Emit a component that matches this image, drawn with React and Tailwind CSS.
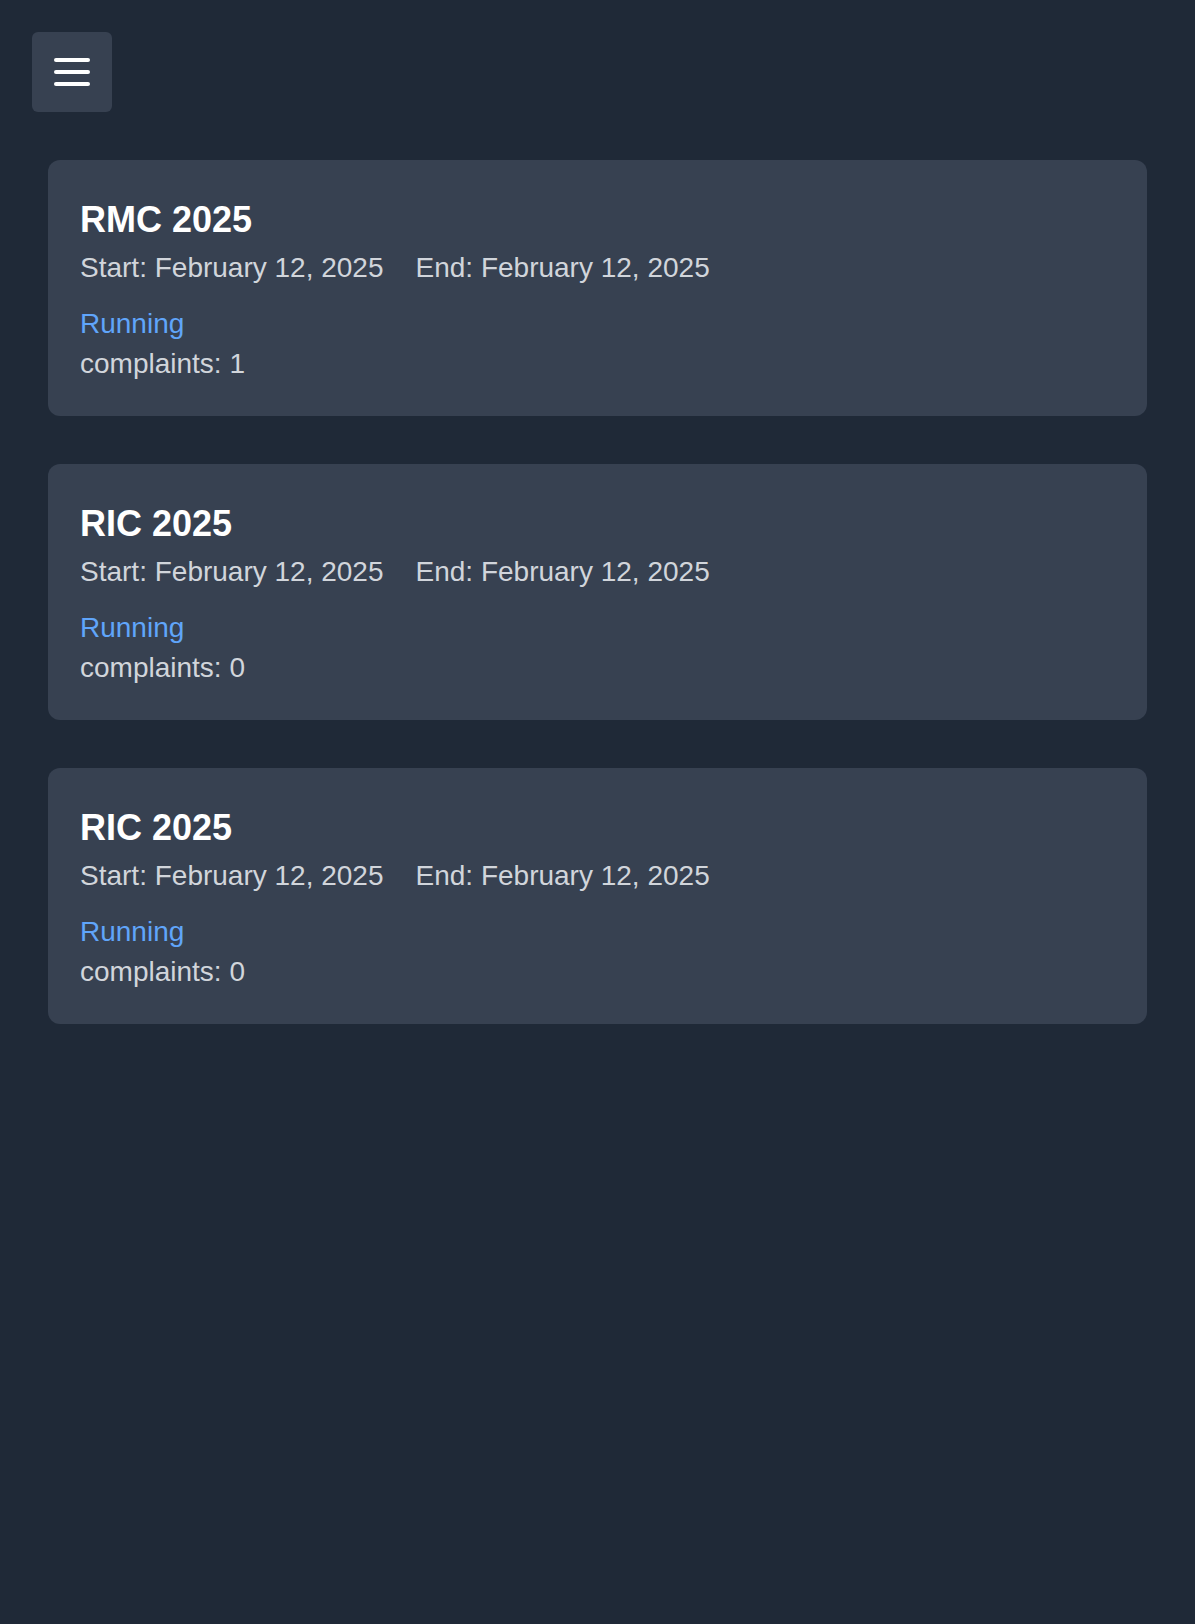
import React from 'react';

const competitions = [
  { name: 'RMC 2025', start: 'February 12, 2025', end: 'February 12, 2025', status: 'Running', complaints: 1 },
  { name: 'RIC 2025', start: 'February 12, 2025', end: 'February 12, 2025', status: 'Running', complaints: 0 },
  { name: 'RIC 2025', start: 'February 12, 2025', end: 'February 12, 2025', status: 'Running', complaints: 0 },
];

const MenuButton = () => (
  <button
    type="button"
    className="w-20 h-20 rounded-md bg-[#374151] flex flex-col items-center justify-center gap-2"
  >
    <span className="block w-9 h-1 rounded-full bg-white"></span>
    <span className="block w-9 h-1 rounded-full bg-white"></span>
    <span className="block w-9 h-1 rounded-full bg-white"></span>
  </button>
);

const CompetitionCard = ({ item }) => (
  <div className="bg-[#374151] rounded-xl px-8 pt-10 pb-8">
    <h2 className="text-[36px] leading-[40px] font-bold text-white">{item.name}</h2>
    <div className="mt-2 flex gap-8 text-[28px] leading-[40px] text-[#d1d5db]">
      <span>Start: {item.start}</span>
      <span>End: {item.end}</span>
    </div>
    <p className="mt-4 text-[28px] leading-[40px] text-[#60a5fa]">{item.status}</p>
    <p className="text-[28px] leading-[40px] text-[#d1d5db]">complaints: {item.complaints}</p>
  </div>
);

export default function App() {
  return (
    <div className="min-h-screen bg-[#1f2937] font-['Liberation_Sans',Arial,sans-serif]">
      <div className="p-8">
        <MenuButton />
      </div>
      <div className="px-12 pt-4 flex flex-col gap-12">
        {competitions.map((item, i) => (
          <CompetitionCard key={i} item={item} />
        ))}
      </div>
    </div>
  );
}
